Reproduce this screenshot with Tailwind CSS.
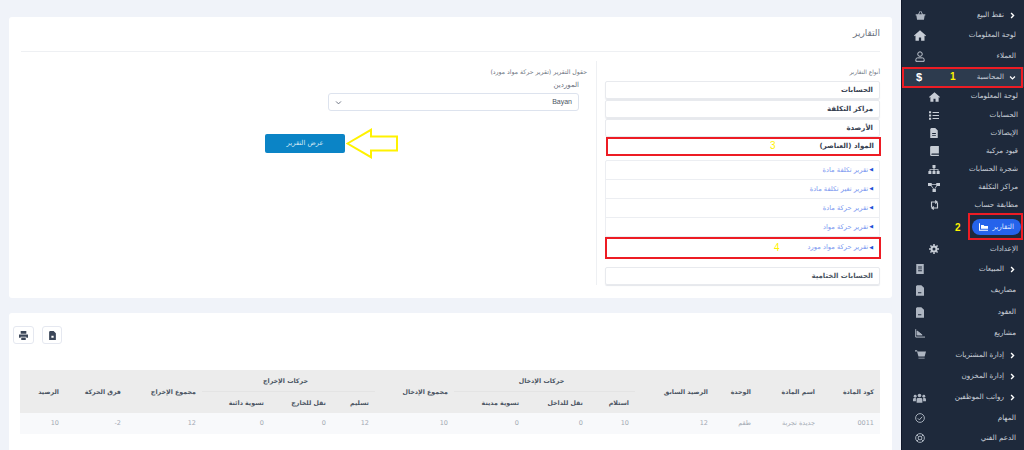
<!doctype html>
<html lang="ar">
<head>
<meta charset="utf-8">
<script src="https://cdn.jsdelivr.net/npm/@tailwindcss/browser@4"></script>
</head>
<body class="m-0 overflow-hidden bg-[#f0f3f9] font-['DejaVu_Sans',sans-serif]">
<div class="relative flex h-[450px] w-[1024px] overflow-hidden">
  <main class="flex w-[901px] flex-col gap-[15px] px-[9px] pt-[17px]" dir="rtl">
    <section class="h-[281px] shrink-0 rounded-[3px] bg-white px-[12px]">
      <h1 class="flex h-[35px] items-center border-b border-[#eef0f3] text-[9px] font-normal text-[#6b7280]">التقارير</h1>
      <div class="flex pt-[9px]">
        <div class="w-[284px] border-l border-[#eef0f3] pl-[8px] pt-[4px]">
          <p class="mb-[2px] h-[14px] text-[5.8px] leading-[14px] text-[#6b7280]">أنواع التقارير</p>
          <div class="flex flex-col text-[7px] font-bold text-[#374151]">
            <div class="mb-px flex h-[18px] items-center rounded-[2px] border border-[#e8eaee] px-[6px] shadow-[0_1px_1px_#e5e7eb]">الحسابات</div>
            <div class="mb-px flex h-[18px] items-center rounded-[2px] border border-[#e8eaee] px-[6px] shadow-[0_1px_1px_#e5e7eb]">مراكز التكلفة</div>
            <div class="flex h-[18px] items-center rounded-[2px] border border-[#e8eaee] px-[6px]">الأرصدة</div>
            <div class="flex h-[19px] items-center px-[6px]">المواد (العناصر)</div>
          </div>
          <div class="mt-[4px] flex flex-col rounded-[2px] border border-[#eceef2] text-[6.7px] text-[#7a97f0]">
            <div class="flex h-[19px] items-center gap-px border-b border-[#eceef2] px-[6px]"><span class="text-[5px] text-[#1f4fd8]">◀</span>تقرير تكلفة مادة</div>
            <div class="flex h-[19px] items-center gap-px border-b border-[#eceef2] px-[6px]"><span class="text-[5px] text-[#1f4fd8]">◀</span>تقرير تغير تكلفة مادة</div>
            <div class="flex h-[19px] items-center gap-px border-b border-[#eceef2] px-[6px]"><span class="text-[5px] text-[#1f4fd8]">◀</span>تقرير حركة مادة</div>
            <div class="flex h-[19px] items-center gap-px border-b border-[#eceef2] px-[6px]"><span class="text-[5px] text-[#1f4fd8]">◀</span>تقرير حركة مواد</div>
            <div class="flex h-[21px] items-center gap-px px-[6px]"><span class="text-[5px] text-[#1f4fd8]">◀</span>تقرير حركة مواد مورد</div>
          </div>
          <div class="mt-[8px] flex h-[18px] items-center rounded-[2px] border border-[#e8eaee] px-[6px] text-[7px] font-bold text-[#4b5563] shadow-[0_1px_1px_#e5e7eb]">الحسابات الختامية</div>
        </div>
        <div class="pr-[17px] pt-[4px]">
          <p class="-mr-[8px] h-[14px] text-[6.2px] leading-[14px] text-[#6b7280]">حقول التقرير (تقرير حركة مواد مورد)</p>
          <label class="block h-[14px] text-[7px] leading-[13px] text-[#6b7280]">الموردين</label>
          <div class="flex h-[18px] w-[251px] items-center justify-between rounded-[3px] border border-[#dde3ee] px-[6px] font-['Liberation_Sans',sans-serif] text-[7px] text-[#4b5563]">
            <span>Bayan</span>
            <svg class="h-[7px] w-[7px]" viewBox="0 0 10 10" fill="none" stroke="#6b7280" stroke-width="1.4"><path d="M1.5 3.5 5 7l3.5-3.5"/></svg>
          </div>
          <button class="mr-[234px] mt-[23px] flex h-[19px] w-[80px] items-center justify-center rounded-[2px] bg-[#0b84c6] text-[6.8px] text-[#d5e9f5]">عرض التقرير</button>
        </div>
      </div>
    </section>
    <section class="h-[200px] shrink-0 rounded-t-[3px] bg-white px-[12px]">
      <div class="-ml-[8px] flex h-[57px] items-start gap-[8px] pt-[13px]" dir="ltr">
        <button class="flex h-[18px] w-[21px] items-center justify-center rounded-[3px] border border-[#e5e8f0] bg-white"><svg class="h-[9px] w-[9px]" viewBox="0 0 16 16" fill="#3b4658"><path d="M3 0h10v5H3zm-3 6h16v6h-3v-2H3v2H0zm4 5.500h8V16H4z"/></svg></button>
        <button class="flex h-[18px] w-[20px] items-center justify-center rounded-[3px] border border-[#e5e8f0] bg-white"><svg class="h-[9px] w-[7px]" viewBox="0 0 12 16" fill="#3b4658"><path d="M0 1.500 1.500 0H8l4 4v12H0zm4 7V12h4V8.500z"/></svg></button>
      </div>
      <table class="w-[860px] table-fixed border-collapse text-[6.5px] text-[#a3a9b3]">
        <colgroup>
          <col class="w-[59px]"><col class="w-[64px]"><col class="w-[43px]"><col class="w-[79px]"><col class="w-[46px]"><col class="w-[64px]"><col class="w-[71px]"><col class="w-[79px]"><col class="w-[43px]"><col class="w-[62px]"><col class="w-[68px]"><col class="w-[75px]"><col class="w-[62px]"><col class="w-[45px]">
        </colgroup>
        <thead class="bg-[#ececec] text-[6.3px] font-bold text-[#4b5563]">
          <tr class="h-[21px]">
            <th rowspan="2" class="pr-[6px] text-right">كود المادة</th>
            <th rowspan="2" class="pr-[6px] text-right">اسم المادة</th>
            <th rowspan="2" class="pr-[6px] text-right">الوحدة</th>
            <th rowspan="2" class="pr-[6px] text-right">الرصيد السابق</th>
            <th colspan="3" class="border-b border-[#e4e4e4] pr-[6px] text-center">حركات الإدخال</th>
            <th rowspan="2" class="pr-[6px] text-right">مجموع الإدخال</th>
            <th colspan="3" class="border-b border-[#e4e4e4] pr-[6px] text-center">حركات الإخراج</th>
            <th rowspan="2" class="pr-[6px] text-right">مجموع الإخراج</th>
            <th rowspan="2" class="pr-[6px] text-right">فرق الحركة</th>
            <th rowspan="2" class="pr-[6px] text-right">الرصيد</th>
          </tr>
          <tr class="h-[22px]">
            <th class="pr-[6px] text-right">استلام</th>
            <th class="pr-[6px] text-right">نقل للداخل</th>
            <th class="pr-[6px] text-right">تسوية مدينة</th>
            <th class="pr-[6px] text-right">تسليم</th>
            <th class="pr-[6px] text-right">نقل للخارج</th>
            <th class="pr-[6px] text-right">تسوية دائنة</th>
          </tr>
        </thead>
        <tbody>
          <tr class="h-[21px] bg-[#f8f9fb]">
            <td class="pr-[6px]">0011</td><td class="pr-[6px]">جديدة تجربة</td><td class="pr-[6px]">طقم</td><td class="pr-[6px]">12</td><td class="pr-[6px]">10</td><td class="pr-[6px]">0</td><td class="pr-[6px]">0</td><td class="pr-[6px]">10</td><td class="pr-[6px]">12</td><td class="pr-[6px]">0</td><td class="pr-[6px]">0</td><td class="pr-[6px]">12</td><td class="pr-[6px]">2-</td><td class="pr-[6px]">10</td>
          </tr>
        </tbody>
      </table>
    </section>
  </main>

  <aside class="w-[123px] border-l border-[#10182a] bg-[#1e293b] pt-[5px] text-[7.2px] text-[#c7cdd6]" dir="rtl">
    <div class="flex h-[20px] items-center pr-[8px] pl-[13px]"><svg class="ml-[5px] h-[7px] w-[7px]" viewBox="0 0 10 10" fill="none" stroke="#fff" stroke-width="2"><path d="M3 1.500 6.500 5 3 8.500"/></svg><span class="flex-1">نقط البيع</span><svg class="h-[11px] w-[11px]" viewBox="0 0 16 16" fill="#aeb6c2"><path d="M1 6h14v2h-1l-1 6H3L2 8H1zM4.500 6 7 1.500l1 .5L6 6zm7 0L9 1.500 8 2l2 4z"/></svg></div>
    <div class="flex h-[21px] items-center pr-[8px] pl-[12px]"><span class="flex-1">لوحة المعلومات</span><svg class="h-[11px] w-[12px]" viewBox="0 0 16 14" fill="#c7cdd6"><path d="M8 0 0 7l1 1 1-.9V14h4.500V9.500h3V14H14V7.100l1 .9 1-1z"/></svg></div>
    <div class="flex h-[21px] items-center pr-[8px] pl-[13px]"><span class="flex-1">العملاء</span><svg class="h-[11px] w-[10px]" viewBox="0 0 14 16" fill="none" stroke="#c7cdd6" stroke-width="1.400"><circle cx="7" cy="4.500" r="3.300"/><path d="M1 15v-2.500A2.500 2.500 0 0 1 3.500 10h7a2.500 2.500 0 0 1 2.500 2.500V15z"/></svg></div>
    <div class="flex h-[20px] items-center bg-[#2d3b4e] pr-[8px] pl-[14px]"><svg class="ml-[5px] h-[7px] w-[7px]" viewBox="0 0 10 10" fill="none" stroke="#fff" stroke-width="1.800"><path d="M1.500 3.500 5 7l3.500-3.500"/></svg><span class="flex-1">المحاسبة</span><span class="font-['Liberation_Sans',sans-serif] text-[11px] font-bold leading-none text-white">$</span></div>
    <div class="flex h-[19px] items-center pr-[6px] pl-[27px]"><span class="flex-1">لوحة المعلومات</span><svg class="h-[10px] w-[11px]" viewBox="0 0 16 14" fill="#c7cdd6"><path d="M8 0 0 7l1 1 1-.9V14h4.500V9.500h3V14H14V7.100l1 .9 1-1z"/></svg></div>
    <div class="flex h-[18px] items-center pr-[6px] pl-[27px]"><span class="flex-1">الحسابات</span><svg class="h-[9px] w-[10px]" viewBox="0 0 14 12" fill="#c7cdd6"><path d="M5 1h9v1.500H5zm0 4.200h9v1.500H5zm0 4.300h9V11H5zM0 0h3v3H0zm0 4.500h3v3H0zM0 9h3v3H0z"/></svg></div>
    <div class="flex h-[18px] items-center pr-[6px] pl-[28px]"><span class="flex-1">الإيصالات</span><svg class="h-[10px] w-[8px]" viewBox="0 0 12 16" fill="#c7cdd6"><path d="M0 1.500 1.500 0H8l4 4v12H0zM3 8v1.500h6V8zm0 3v1.500h6V11z"/></svg></div>
    <div class="flex h-[18px] items-center pr-[6px] pl-[28px]"><span class="flex-1">قيود مركبة</span><svg class="h-[10px] w-[9px]" viewBox="0 0 14 16" fill="#c7cdd6"><path d="M2 0h12v12H3a1 1 0 0 0 0 2h11v2H2a2 2 0 0 1-2-2V2a2 2 0 0 1 2-2z"/></svg></div>
    <div class="flex h-[18px] items-center pr-[6px] pl-[26px]"><span class="flex-1">شجرة الحسابات</span><svg class="h-[9px] w-[12px]" viewBox="0 0 16 12" fill="#c7cdd6"><path d="M6 0h4v4H8.700v1.500H14V8h1.500v4h-4V8h1.300V6.700H8.700V8H10v4H6V8h1.300V6.700H3.200V8H4.500v4h-4V8H2V5.500h5.300V4H6z"/></svg></div>
    <div class="flex h-[18px] items-center pr-[6px] pl-[26px]"><span class="flex-1">مراكز التكلفة</span><svg class="h-[9px] w-[12px]" viewBox="0 0 16 12" fill="#c7cdd6"><path d="M0 0h5v4H0zm11 0h5v4h-5zM6 8h4.500v4H6zM5 1.500h6v1H5zM4 4h1.200L8 8H7zm8 0h-1.200L8.500 8h1z"/></svg></div>
    <div class="flex h-[18px] items-center pr-[6px] pl-[27px]"><span class="flex-1">مطابقة حساب</span><svg class="h-[12px] w-[11px]" viewBox="0 0 14 16" fill="none" stroke="#c7cdd6" stroke-width="1.500"><path d="M3 11V4h7M8 2l2.500 2L8 6M11 5v7H4M6 10l-2.500 2L6 14"/></svg></div>
    <div class="flex h-[26px] items-center pr-[3px]"><div class="flex h-[16px] w-[49px] items-center gap-[4px] rounded-full bg-[#2563eb] px-[7px] text-[#dbe6ff]"><span>التقارير</span><svg class="h-[8px] w-[10px]" viewBox="0 0 14 11" fill="#fff"><path d="M0 0h1.500v9.500H14V11H0zM3 2.500h4l1 1.500h6v4H3z"/></svg></div></div>
    <div class="flex h-[18px] items-center pr-[6px] pl-[27px]"><span class="flex-1">الإعدادات</span><svg class="h-[10px] w-[10px]" viewBox="0 0 16 16" fill="none" stroke="#c7cdd6" stroke-width="3.200"><circle cx="8" cy="8" r="4"/><path stroke-width="2.500" d="M8 0v3M8 13v3M0 8h3M13 8h3M2.300 2.300l2 2M11.700 11.700l2 2M2.300 13.700l2-2M11.700 4.300l2-2"/></svg></div>
    <div class="flex h-[22px] items-center pr-[8px] pl-[14px]"><svg class="ml-[5px] h-[7px] w-[7px]" viewBox="0 0 10 10" fill="none" stroke="#fff" stroke-width="2"><path d="M3 1.500 6.500 5 3 8.500"/></svg><span class="flex-1">المبيعات</span><svg class="h-[10px] w-[8px]" viewBox="0 0 12 16" fill="#aeb6c2"><path d="M0 0h12v16H0zm3 4v1.500h6V4zm0 3v1.500h6V7zm0 3v1.500h6V10z"/></svg></div>
    <div class="flex h-[21px] items-center pr-[8px] pl-[14px]"><span class="flex-1">مصاريف</span><svg class="h-[11px] w-[8px]" viewBox="0 0 12 16" fill="#aeb6c2"><path d="M0 1.500 1.500 0H8l4 4v12H0zm3 9V12h5v-1.500z"/></svg></div>
    <div class="flex h-[22px] items-center pr-[8px] pl-[14px]"><span class="flex-1">العقود</span><svg class="h-[11px] w-[8px]" viewBox="0 0 12 16" fill="#aeb6c2"><path d="M0 1.500 1.500 0H8l4 4v12H0zm3 9V12h5v-1.500z"/></svg></div>
    <div class="flex h-[21px] items-center pr-[8px] pl-[13px]"><span class="flex-1">مشاريع</span><svg class="h-[9px] w-[10px]" viewBox="0 0 14 12" fill="none" stroke="#aeb6c2" stroke-width="1.400"><path d="M1 0v11h13"/><path d="M3 2.500 10 8H3z" fill="#aeb6c2"/></svg></div>
    <div class="flex h-[22px] items-center pr-[8px] pl-[13px]"><svg class="ml-[5px] h-[7px] w-[7px]" viewBox="0 0 10 10" fill="none" stroke="#fff" stroke-width="2"><path d="M3 1.500 6.500 5 3 8.500"/></svg><span class="flex-1">إدارة المشتريات</span><svg class="h-[10px] w-[11px]" viewBox="0 0 16 14" fill="#aeb6c2"><path d="M0 0h3l.5 2H16l-2 7H5L3 2H0zM5 11h9v1H5z"/></svg></div>
    <div class="flex h-[21px] items-center pr-[8px]"><svg class="ml-[5px] h-[7px] w-[7px]" viewBox="0 0 10 10" fill="none" stroke="#fff" stroke-width="2"><path d="M3 1.500 6.500 5 3 8.500"/></svg><span>إدارة المخزون</span></div>
    <div class="flex h-[21px] items-center pr-[8px] pl-[11px]"><svg class="ml-[5px] h-[7px] w-[7px]" viewBox="0 0 10 10" fill="none" stroke="#fff" stroke-width="2"><path d="M3 1.500 6.500 5 3 8.500"/></svg><span class="flex-1">رواتب الموظفين</span><svg class="h-[10px] w-[13px]" viewBox="0 0 18 13" fill="#aeb6c2"><circle cx="9" cy="3" r="2.500"/><circle cx="3" cy="4" r="2"/><circle cx="15" cy="4" r="2"/><path d="M5 13V8.500a2 2 0 0 1 2-2h4a2 2 0 0 1 2 2V13zM0 11V8.500a2 2 0 0 1 2-2h2v4.500zm14 0V6.500h2a2 2 0 0 1 2 2V11z"/></svg></div>
    <div class="flex h-[20px] items-center pr-[8px] pl-[13px]"><span class="flex-1">المهام</span><svg class="h-[10px] w-[10px]" viewBox="0 0 16 16" fill="none" stroke="#aeb6c2" stroke-width="1.500"><circle cx="8" cy="8" r="7"/><path d="m4.500 8.500 2.500 2.500 4.500-5"/></svg></div>
    <div class="flex h-[20px] items-center pr-[8px] pl-[13px]"><span class="flex-1">الدعم الفني</span><svg class="h-[10px] w-[10px]" viewBox="0 0 16 16" fill="none" stroke="#aeb6c2" stroke-width="1.500"><circle cx="8" cy="8" r="7"/><circle cx="8" cy="8" r="3"/><path d="m3 3 3 3m4 4 3 3M13 3l-3 3M6 10l-3 3"/></svg></div>
  </aside>

  <!-- annotations -->
  <svg class="absolute left-[346px] top-[128px] h-[31px] w-[52px]" viewBox="0 0 52 31" fill="none" stroke="#fff200" stroke-width="2"><path d="M1.500 15.500 25 1.800v6.700h26v14H25v6.700z"/></svg>
  <div class="absolute left-[606px] top-[137px] h-[19px] w-[275px] border-2 border-[#ed1c24]"></div>
  <div class="absolute left-[605px] top-[237px] h-[22px] w-[276px] border-2 border-[#ed1c24]"></div>
  <div class="absolute left-[902px] top-[67px] h-[21px] w-[121px] border-2 border-[#ed1c24]"></div>
  <div class="absolute left-[968px] top-[213px] h-[27px] w-[55px] border-2 border-[#ed1c24]"></div>
  <span class="absolute left-[770px] top-[140px] font-['Liberation_Sans',sans-serif] text-[10px] leading-[12px] text-[#fff200]">3</span>
  <span class="absolute left-[774px] top-[242px] font-['Liberation_Sans',sans-serif] text-[10px] leading-[12px] text-[#fff200]">4</span>
  <span class="absolute left-[950px] top-[71px] font-['Liberation_Sans',sans-serif] text-[10px] font-bold leading-[12px] text-[#fff200]">1</span>
  <span class="absolute left-[955px] top-[222px] font-['Liberation_Sans',sans-serif] text-[10px] font-bold leading-[12px] text-[#fff200]">2</span>
</div>
</body>
</html>
